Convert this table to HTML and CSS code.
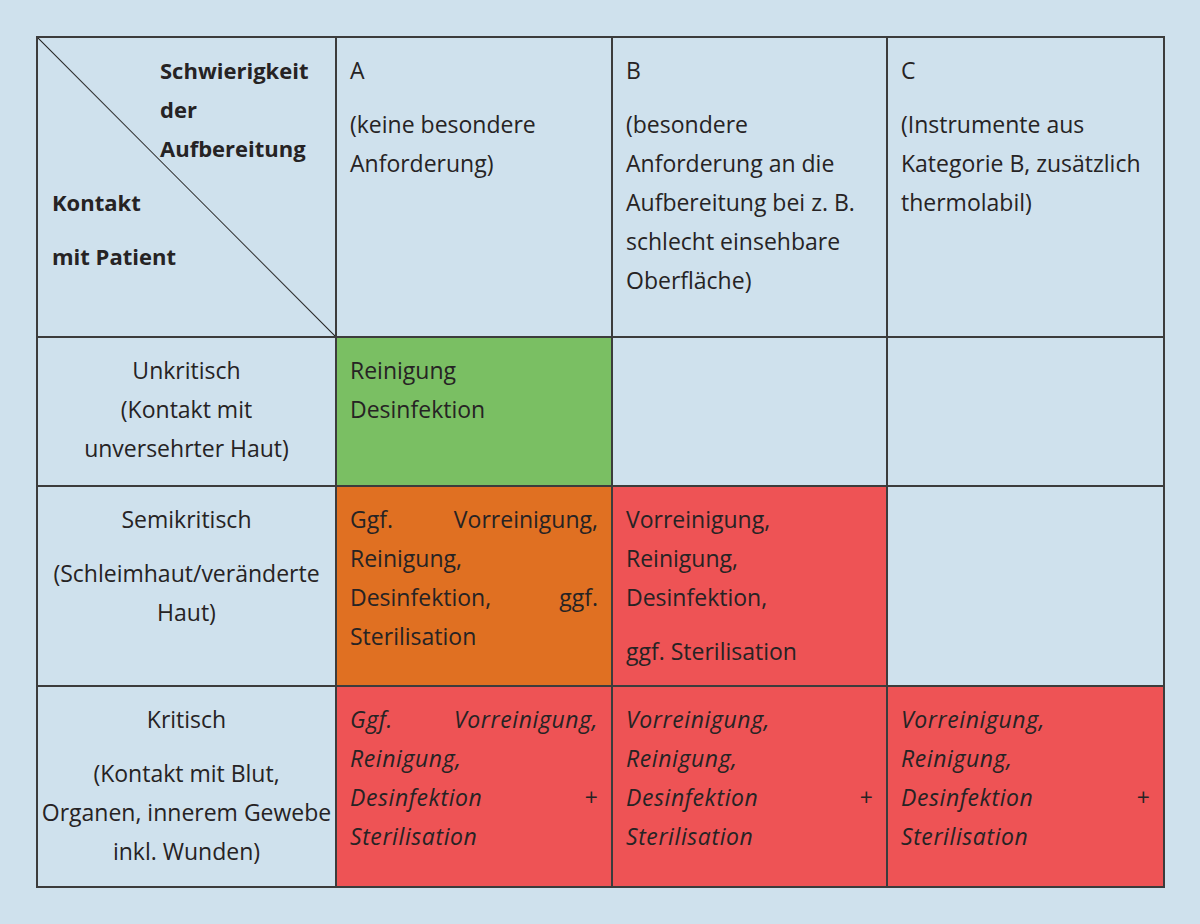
FILE: index.html
```html
<!DOCTYPE html>
<html lang="de">
<head>
<meta charset="utf-8">
<title>Risikobewertung Medizinprodukte</title>
<link rel="stylesheet" href="styles.css">
</head>
<body>
<table class="matrix">
  <colgroup>
    <col class="c0"><col class="c1"><col class="c2"><col class="c3">
  </colgroup>
  <tr class="r0">
    <td class="corner">
      <div class="corner-top">
        <div>Schwierigkeit</div>
        <div>der</div>
        <div>Aufbereitung</div>
      </div>
      <div class="corner-bottom">
        <p>Kontakt</p>
        <p>mit Patient</p>
      </div>
    </td>
    <td><p>A</p><p>(keine besondere Anforderung)</p></td>
    <td><p>B</p><p>(besondere<br>Anforderung an die Aufbereitung bei z.&nbsp;B. schlecht einsehbare Oberfläche)</p></td>
    <td><p>C</p><p>(Instrumente aus Kategorie B, zusätzlich thermolabil)</p></td>
  </tr>
  <tr class="r1">
    <td class="label"><p>Unkritisch<br>(Kontakt mit<br>unversehrter Haut)</p></td>
    <td class="green"><p>Reinigung<br>Desinfektion</p></td>
    <td></td>
    <td></td>
  </tr>
  <tr class="r2">
    <td class="label"><p>Semikritisch</p><p>(Schleimhaut/veränderte<br>Haut)</p></td>
    <td class="orange">
      <div class="j">Ggf. Vorreinigung,</div>
      <div>Reinigung,</div>
      <div class="j">Desinfektion, ggf.</div>
      <div>Sterilisation</div>
    </td>
    <td class="red">
      <div>Vorreinigung,</div>
      <div>Reinigung,</div>
      <div>Desinfektion,</div>
      <p>ggf. Sterilisation</p>
    </td>
    <td></td>
  </tr>
  <tr class="r3">
    <td class="label"><p>Kritisch</p><p>(Kontakt mit Blut,<br>Organen, innerem Gewebe<br>inkl. Wunden)</p></td>
    <td class="red it">
      <div class="j">Ggf. Vorreinigung,</div>
      <div>Reinigung,</div>
      <div class="j">Desinfektion +</div>
      <div>Sterilisation</div>
    </td>
    <td class="red it">
      <div>Vorreinigung,</div>
      <div>Reinigung,</div>
      <div class="j">Desinfektion +</div>
      <div>Sterilisation</div>
    </td>
    <td class="red it">
      <div>Vorreinigung,</div>
      <div>Reinigung,</div>
      <div class="j">Desinfektion +</div>
      <div>Sterilisation</div>
    </td>
  </tr>
</table>
</body>
</html>
```

FILE: styles.css
```css
html, body {
  margin: 0;
  padding: 0;
  background: #cfe1ed;
}
body {
  width: 1200px;
  height: 924px;
  font-family: "Open Sans", "Noto Sans", sans-serif;
  font-size: 23px;
  color: #262324;
}
.matrix {
  margin: 36px 0 0 36px;
  border-collapse: collapse;
  table-layout: fixed;
  width: 1127px;
}
.c0 { width: 299px; }
.c1 { width: 276px; }
.c2 { width: 275px; }
.c3 { width: 277px; }
.r0 { height: 300px; }
.r1 { height: 149px; }
.r2 { height: 200px; }
.r3 { height: 201px; }
.matrix td {
  border: 2px solid #3c3c3c;
  vertical-align: top;
  padding: 13px 13px 0 13px;
  line-height: 39px;
}
.matrix p { margin: 0; }
.matrix p + p { margin-top: 15px; }
.matrix div + p { margin-top: 15px; }
.corner {
  background: linear-gradient(to top right, transparent calc(50% - 1px), #2a2a2a 50%, transparent calc(50% + 1px));
  font-weight: 700;
  font-size: 22px;
  padding-left: 14px;
}
.matrix td.corner { padding-left: 14px; }
.corner-top { padding-left: 108px; }
.corner-bottom { margin-top: 15px; }
.label {
  text-align: center;
  white-space: nowrap;
}
.matrix td.label { padding-left: 0; padding-right: 0; }
.green { background: #7abf63; }
.orange { background: #e07022; }
.red { background: #ee5355; }
.it { font-style: italic; letter-spacing: 0.6px; }
.j { text-align: justify; text-align-last: justify; }
```
